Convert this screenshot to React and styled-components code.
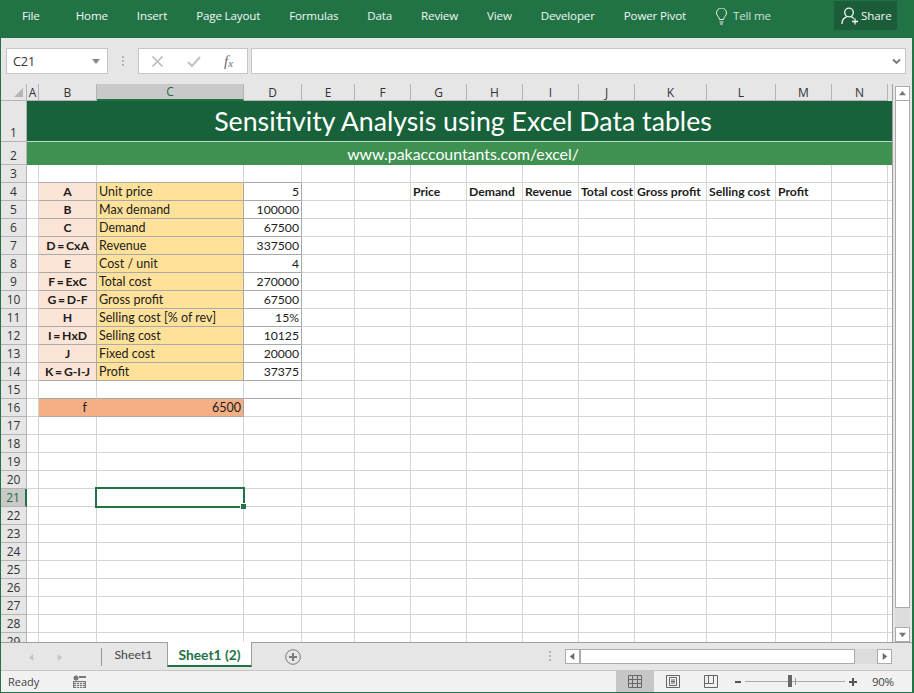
import React from 'react';
import styled, { createGlobalStyle } from 'styled-components';

const GlobalStyle = createGlobalStyle`
  html, body {
    margin: 0;
    padding: 0;
    overflow: hidden;
    background: #e6e6e6;
  }
`;

const UI_FONT = '"Open Sans", "Noto Sans", sans-serif';
const CELL_FONT = 'Lato, "Open Sans", sans-serif';

const Window = styled.div`
  box-sizing: border-box;
  width: 914px;
  height: 693px;
  display: flex;
  flex-direction: column;
  border-left: 1px solid #217346;
  border-right: 2px solid #217346;
  border-bottom: 1px solid #217346;
  background: #e6e6e6;
  font-family: ${UI_FONT};
  overflow: hidden;
`;

const Ribbon = styled.div`
  height: 38px;
  flex: none;
  display: flex;
  align-items: flex-start;
  gap: 29px;
  margin-left: -1px;
  margin-right: -2px;
  padding-left: 22px;
  background: #217346;
`;

const RibbonTab = styled.span`
  margin-top: 7px;
  line-height: 18px;
  font-size: 11.6px;
  letter-spacing: -0.16px;
  white-space: nowrap;
  color: #f2f7f4;
  margin-right: ${(p) => (p.$first ? '7px' : '0')};
`;

const TellMe = styled(RibbonTab)`
  display: flex;
  align-items: center;
  gap: 5px;
  color: #cfe0d6;
`;

const ShareButton = styled.div`
  margin: 1px 17px 0 auto;
  width: 63px;
  height: 29px;
  display: flex;
  align-items: center;
  gap: 1px;
  padding-left: 7px;
  box-sizing: border-box;
  background: #1b5c39;
  color: #f2f7f4;
  font-size: 11.6px;
  letter-spacing: -0.1px;
`;

const FormulaBar = styled.div`
  height: 46px;
  flex: none;
  box-sizing: border-box;
  display: flex;
  align-items: flex-start;
  padding: 10px 6px 0 5px;
  background: #e6e6e6;
`;

const FieldBox = styled.div`
  box-sizing: border-box;
  height: 26px;
  display: flex;
  align-items: center;
  background: #fff;
  border: 1px solid #c6c6c6;
`;

const NameBox = styled(FieldBox)`
  width: 102px;
  justify-content: space-between;
  padding: 0 7px 0 6px;
  font-size: 12.5px;
  color: #333;
`;

const Grip = styled.div`
  width: 2px;
  display: flex;
  flex-direction: column;
  gap: 2px;
  flex: none;
  i {
    width: 2px;
    height: 2px;
    background: #b5b5b5;
  }
`;

const BarGrip = styled(Grip)`
  margin: 8px 14px 0 14px;
`;

const FxBox = styled(FieldBox)`
  width: 110px;
  margin-right: 3px;
  padding-left: 12px;
  gap: 23px;
`;

const FxLabel = styled.span`
  font-family: "Liberation Serif", serif;
  font-style: italic;
  font-size: 15px;
  color: #6e6e6e;
  sub {
    font-size: 11px;
    vertical-align: -1px;
    line-height: 0;
  }
`;

const FormulaInput = styled(FieldBox)`
  flex: 1;
  justify-content: flex-end;
  padding-right: 4px;
`;

const Workspace = styled.div`
  height: 558px;
  flex: none;
  display: flex;
`;

const Sheet = styled.div`
  width: 892px;
  box-sizing: border-box;
  flex: none;
  display: grid;
  grid-template-columns: 26px 12px 58px 147px 58px 53px 56px 56px 56px 56px 56px 72px 69px 56px 56px 4px;
  grid-template-rows: 17px 41px 23px 18px repeat(26, 18px);
  overflow: hidden;
  background: #fff;
  border-right: 1px solid #9f9f9f;
  font-family: ${CELL_FONT};
`;

const Corner = styled.div`
  background: #e6e6e6;
  border-right: 1px solid #b4b4b4;
  border-bottom: 1px solid #b4b4b4;
  display: flex;
  align-items: flex-end;
  justify-content: flex-end;
  padding: 0 3px 3px 0;
`;

const ColHead = styled.div`
  box-sizing: border-box;
  display: flex;
  align-items: center;
  justify-content: center;
  font-family: ${UI_FONT};
  font-size: 12px;
  color: ${(p) => (p.$active ? '#1e6b40' : '#333')};
  background: ${(p) => (p.$active ? '#c9c9c9' : '#e6e6e6')};
  border-right: 1px solid ${(p) => (p.$blank ? 'transparent' : '#b4b4b4')};
  border-bottom: ${(p) => (p.$active ? '2px solid #217346' : p.$blank ? '0' : '1px solid #b4b4b4')};
`;

const RowHead = styled.div`
  box-sizing: border-box;
  display: flex;
  align-items: flex-end;
  justify-content: center;
  font-family: ${UI_FONT};
  font-size: 12px;
  line-height: 17px;
  color: ${(p) => (p.$active ? '#1e6b40' : '#333')};
  background: ${(p) => (p.$active ? '#c9c9c9' : '#e6e6e6')};
  border-bottom: 1px solid #b4b4b4;
  border-right: ${(p) => (p.$active ? '2px solid #217346' : '1px solid #b4b4b4')};
`;

const Banner = styled.div`
  grid-column: 2 / -1;
  display: flex;
  align-items: center;
  justify-content: center;
  padding-left: 7px;
  color: #fff;
  border-bottom: ${(p) => (p.$light ? '0' : '1px solid #c3d6c9')};
  background: ${(p) => (p.$light ? '#3f9152' : '#18623b')};
  font-size: ${(p) => (p.$light ? '15.85px' : '26.7px')};
`;

const Cell = styled.div`
  box-sizing: border-box;
  position: relative;
  min-width: 0;
  display: flex;
  align-items: center;
  padding: 0 2px;
  font-size: 12.2px;
  color: #1c1c1c;
  white-space: nowrap;
  background: ${(p) => p.$fill || '#fff'};
  font-weight: ${(p) => (p.$bold ? 700 : 400)};
  justify-content: ${(p) => (p.$align === 'right' ? 'flex-end' : 'flex-start')};
  border-right: ${(p) => (p.$noRight ? '0' : `1px solid ${p.$boxed ? '#a9a9a9' : '#d4d4d4'}`)};
  border-bottom: 1px solid ${(p) => (p.$boxed || p.$ledge ? '#a9a9a9' : '#d4d4d4')};
`;

const KeyCell = styled(Cell)`
  font-weight: 700;
  word-spacing: -1.2px;
  justify-content: center;
`;

const LabelCell = styled(Cell)`
  font-size: 12.5px;
`;

const FactorCell = styled(LabelCell)`
  padding-right: 10px;
`;

const SelectedCell = styled(Cell)`
  &::after {
    content: '';
    position: absolute;
    top: -2px;
    left: -2px;
    right: -2px;
    bottom: -2px;
    border: 2px solid #217346;
    z-index: 2;
  }
  &::before {
    content: '';
    position: absolute;
    right: -3px;
    bottom: -3px;
    width: 5px;
    height: 5px;
    background: #217346;
    box-shadow: -1px -1px 0 #fff;
    z-index: 3;
  }
`;

const VScroll = styled.div`
  flex: 1;
  display: flex;
  flex-direction: column;
  padding: 2px 3px 0 2px;
`;

const ScrollButton = styled.div`
  box-sizing: border-box;
  width: 15px;
  height: 15px;
  flex: none;
  display: flex;
  align-items: center;
  justify-content: center;
  background: #fff;
  border: 1px solid #ababab;
`;

const VThumb = styled.div`
  box-sizing: border-box;
  height: 507px;
  flex: none;
  background: #fff;
  border: 1px solid #ababab;
  border-top: 0;
`;

const VTrack = styled.div`
  flex: 1;
  background: #dcdcdc;
`;

const TabBar = styled.div`
  height: 28px;
  flex: none;
  box-sizing: border-box;
  display: flex;
  align-items: flex-start;
  border-top: 1px solid #9f9f9f;
  background: #e6e6e6;
`;

const TabNav = styled.div`
  width: 101px;
  height: 18px;
  flex: none;
  box-sizing: border-box;
  display: flex;
  align-items: center;
  gap: 21px;
  padding-left: 27px;
  margin-top: 5px;
  border-right: 1px solid #9a9a9a;
`;

const SheetTab = styled.div`
  box-sizing: border-box;
  width: 65px;
  height: 23px;
  padding-right: 2px;
  display: flex;
  align-items: center;
  justify-content: center;
  font-family: ${CELL_FONT};
  font-size: 12.3px;
  color: #444;
`;

const ActiveSheetTab = styled(SheetTab)`
  width: 85px;
  height: 25px;
  margin-top: -1px;
  padding: 2px 0 0;
  font-size: 13.8px;
  font-weight: 700;
  color: #217346;
  background: #fff;
  border-left: 1px solid #9f9f9f;
  border-right: 1px solid #9f9f9f;
  border-bottom: 2px solid #217346;
`;

const AddSheet = styled.div`
  margin: 5px 0 0 33px;
  width: 16px;
  height: 16px;
  flex: none;
`;

const TabGrip = styled(Grip)`
  margin: 8px 14px 0 auto;
`;

const HScroll = styled.div`
  width: 327px;
  height: 15px;
  margin: 6px 20px 0 0;
  flex: none;
  display: flex;
`;

const HThumb = styled.div`
  box-sizing: border-box;
  width: 275px;
  background: #fff;
  border: 1px solid #ababab;
`;

const HTrack = styled.div`
  flex: 1;
  background: #dcdcdc;
`;

const StatusBar = styled.div`
  flex: 1;
  box-sizing: border-box;
  display: flex;
  align-items: center;
  border-top: 1px solid #c6c6c6;
  background: #f1f1f1;
  color: #444;
  font-size: 11px;
  padding-left: 7px;
`;

const Ready = styled.span`
  width: 65px;
  flex: none;
`;

const ViewGroup = styled.div`
  margin-left: auto;
  height: 100%;
  display: flex;
`;

const ViewButton = styled.div`
  width: 38px;
  height: 100%;
  flex: none;
  display: flex;
  align-items: center;
  justify-content: center;
  background: ${(p) => (p.$active ? '#c6c6c6' : 'transparent')};
`;

const ZoomGroup = styled.div`
  display: flex;
  align-items: center;
  margin-left: 5px;
`;

const ZoomSign = styled.span`
  width: ${(p) => (p.$plus ? '8px' : '6px')};
  height: 2px;
  flex: none;
  position: relative;
  background: #555;
  &::after {
    content: '';
    display: ${(p) => (p.$plus ? 'block' : 'none')};
    position: absolute;
    left: 3px;
    top: -3px;
    width: 2px;
    height: 8px;
    background: #555;
  }
`;

const ZoomSlider = styled.div`
  width: 100px;
  height: 1px;
  flex: none;
  position: relative;
  margin: 0 4px;
  background: #aaa;
`;

const ZoomThumb = styled.div`
  position: absolute;
  left: 43px;
  top: -6px;
  width: 4px;
  height: 12px;
  background: #666;
`;

const ZoomTick = styled.div`
  position: absolute;
  left: 50px;
  top: -3px;
  width: 1px;
  height: 7px;
  background: #999;
`;

const ZoomValue = styled.span`
  width: 40px;
  flex: none;
  margin-left: 15px;
  font-size: 11.5px;
  letter-spacing: -0.3px;
`;

const COLUMNS = ['A', 'B', 'C', 'D', 'E', 'F', 'G', 'H', 'I', 'J', 'K', 'L', 'M', 'N', ''];

const TABS = ['Home', 'Insert', 'Page Layout', 'Formulas', 'Data', 'Review', 'View', 'Developer', 'Power Pivot'];

const TABLE = {
  4: ['A', 'Unit price', '5'],
  5: ['B', 'Max demand', '100000'],
  6: ['C', 'Demand', '67500'],
  7: ['D = CxA', 'Revenue', '337500'],
  8: ['E', 'Cost / unit', '4'],
  9: ['F = ExC', 'Total cost', '270000'],
  10: ['G = D-F', 'Gross profit', '67500'],
  11: ['H', 'Selling cost [% of rev]', '15%'],
  12: ['I = HxD', 'Selling cost', '10125'],
  13: ['J', 'Fixed cost', '20000'],
  14: ['K = G-I-J', 'Profit', '37375'],
};

const OUTPUTS = { G: 'Price', H: 'Demand', I: 'Revenue', J: 'Total cost', K: 'Gross profit', L: 'Selling cost', M: 'Profit' };

const Triangle = ({ dir, color = '#777', size = 7 }) => {
  const points = {
    up: '0,6 8,6 4,1',
    down: '0,2 8,2 4,7',
    left: '6,0 6,8 1,4',
    right: '2,0 2,8 7,4',
  };
  return (
    <svg width={size} height={size} viewBox="0 0 8 8">
      <polygon points={points[dir]} fill={color} />
    </svg>
  );
};

const Bulb = () => (
  <svg width="13" height="17" viewBox="0 0 13 17" fill="none" stroke="#e6f0ea" strokeWidth="1">
    <path d="M4.5 11.5C4.5 9 1.5 8 1.5 5a5 5 0 0 1 10 0c0 3-3 4-3 6.5z" />
    <path d="M4.5 14h4M5 16h3" />
  </svg>
);

const PersonPlus = () => (
  <svg width="19" height="18" viewBox="0 0 19 18" fill="none" stroke="#f2f7f4" strokeWidth="1.3">
    <circle cx="8" cy="5.5" r="4.3" />
    <path d="M1 17c0-4 2.500-6.500 5-7.300M10 9.700c1 .3 2 1 2.700 2" />
    <path d="M14 11.500v6M11 14.500h6" />
  </svg>
);

const CancelIcon = () => (
  <svg width="13" height="13" viewBox="0 0 13 13" stroke="#b9b9b9" strokeWidth="1.6">
    <path d="M1.500 1.500l10 10M11.500 1.500l-10 10" />
  </svg>
);

const CheckIcon = () => (
  <svg width="14" height="13" viewBox="0 0 14 13" fill="none" stroke="#c2c2c2" strokeWidth="2">
    <path d="M1 7l4 4 8-9" />
  </svg>
);

const Chevron = () => (
  <svg width="9" height="7" viewBox="0 0 9 7" fill="none" stroke="#777" strokeWidth="1.8">
    <path d="M1 1.500l3.500 3.500L8 1.500" />
  </svg>
);

const AddIcon = () => (
  <svg width="16" height="16" viewBox="0 0 16 16" fill="none" stroke="#7a7a7a">
    <circle cx="8" cy="8" r="7.300" />
    <path d="M8 4v8M4 8h8" strokeWidth="2" />
  </svg>
);

const MacroIcon = () => (
  <svg width="13" height="13" viewBox="0 0 13 13">
    <circle cx="3" cy="3" r="2.500" fill="#777" />
    <path d="M6 1h7v2H6zM0 6h13v7H0z" fill="#777" />
    <path d="M1 7.500h11M1 9.500h11M1 11.500h11M3.500 7v6M6.500 7v6M9.500 7v6" stroke="#f1f1f1" strokeWidth="0.8" />
  </svg>
);

const NormalViewIcon = () => (
  <svg width="14" height="13" viewBox="0 0 14 13" fill="none" stroke="#666">
    <path d="M.5.500h13v12H.5zM.5 4.500h13M.5 8.500h13M4.500.500v12M9.500.500v12" />
  </svg>
);

const PageViewIcon = () => (
  <svg width="14" height="13" viewBox="0 0 14 13" fill="none" stroke="#666">
    <path d="M.5.500h13v12H.5zM3.500 2.500h7v8h-7zM5 5h4M5 6.500h4M5 8h4" />
  </svg>
);

const BreakViewIcon = () => (
  <svg width="14" height="13" viewBox="0 0 14 13" fill="none" stroke="#666">
    <path d="M.5.500h13v12H.5zM.5 8.500h9v-8M4.500 .500v8" />
  </svg>
);

const renderTableCells = (row) => {
  const values = TABLE[row];
  return COLUMNS.map((col, i) => {
    const key = `${row}-${i}`;
    if (col === 'B') return <KeyCell key={key} $boxed $fill="#fce4d6">{values[0]}</KeyCell>;
    if (col === 'C') return <LabelCell key={key} $boxed $fill="#ffe199">{values[1]}</LabelCell>;
    if (col === 'D') return <Cell key={key} $boxed $align="right">{values[2]}</Cell>;
    if (row === 4 && OUTPUTS[col]) return <Cell key={key} $bold>{OUTPUTS[col]}</Cell>;
    return <Cell key={key} $noRight={col === ''} />;
  });
};

const renderRow = (row) => {
  if (TABLE[row]) return renderTableCells(row);
  return COLUMNS.map((col, i) => {
    const key = `${row}-${i}`;
    if (row === 16 && col === 'B') return <FactorCell key={key} $boxed $noRight $align="right" $fill="#f4b084">f</FactorCell>;
    if (row === 16 && col === 'C') return <LabelCell key={key} $boxed $align="right" $fill="#f4b084">6500</LabelCell>;
    if (row === 21 && col === 'C') return <SelectedCell key={key} />;
    return <Cell key={key} $noRight={col === ''} $ledge={(row === 3 || row === 15) && ['B', 'C', 'D'].includes(col)} />;
  });
};

const App = () => {
  const rows = Array.from({ length: 27 }, (_, i) => i + 3);
  return (
    <Window>
      <GlobalStyle />
      <Ribbon>
        <RibbonTab $first>File</RibbonTab>
        {TABS.map((tab) => (
          <RibbonTab key={tab}>{tab}</RibbonTab>
        ))}
        <TellMe>
          <Bulb />
          Tell me
        </TellMe>
        <ShareButton>
          <PersonPlus />
          Share
        </ShareButton>
      </Ribbon>

      <FormulaBar>
        <NameBox>
          C21
          <Triangle dir="down" size={8} color="#888" />
        </NameBox>
        <BarGrip>
          <i />
          <i />
          <i />
        </BarGrip>
        <FxBox>
          <CancelIcon />
          <CheckIcon />
          <FxLabel>
            f<sub>x</sub>
          </FxLabel>
        </FxBox>
        <FormulaInput>
          <Chevron />
        </FormulaInput>
      </FormulaBar>

      <Workspace>
        <Sheet>
          <Corner>
            <svg width="9" height="9" viewBox="0 0 9 9">
              <polygon points="9,0 9,9 0,9" fill="#b5b5b5" />
            </svg>
          </Corner>
          {COLUMNS.map((col) => (
            <ColHead key={col || 'blank'} $active={col === 'C'} $blank={col === ''}>
              {col}
            </ColHead>
          ))}

          <RowHead>1</RowHead>
          <Banner>Sensitivity Analysis using Excel Data tables</Banner>
          <RowHead>2</RowHead>
          <Banner $light>www.pakaccountants.com/excel/</Banner>

          {rows.map((row) => (
            <React.Fragment key={row}>
              <RowHead $active={row === 21}>{row}</RowHead>
              {renderRow(row)}
            </React.Fragment>
          ))}
        </Sheet>
        <VScroll>
          <ScrollButton>
            <Triangle dir="up" />
          </ScrollButton>
          <VThumb />
          <VTrack />
          <ScrollButton>
            <Triangle dir="down" />
          </ScrollButton>
        </VScroll>
      </Workspace>

      <TabBar>
        <TabNav>
          <Triangle dir="left" color="#c4c4c4" />
          <Triangle dir="right" color="#c4c4c4" />
        </TabNav>
        <SheetTab>Sheet1</SheetTab>
        <ActiveSheetTab>Sheet1 (2)</ActiveSheetTab>
        <AddSheet>
          <AddIcon />
        </AddSheet>
        <TabGrip>
          <i />
          <i />
          <i />
        </TabGrip>
        <HScroll>
          <ScrollButton>
            <Triangle dir="left" color="#666" />
          </ScrollButton>
          <HThumb />
          <HTrack />
          <ScrollButton>
            <Triangle dir="right" color="#666" />
          </ScrollButton>
        </HScroll>
      </TabBar>

      <StatusBar>
        <Ready>Ready</Ready>
        <MacroIcon />
        <ViewGroup>
          <ViewButton $active>
            <NormalViewIcon />
          </ViewButton>
          <ViewButton>
            <PageViewIcon />
          </ViewButton>
          <ViewButton>
            <BreakViewIcon />
          </ViewButton>
        </ViewGroup>
        <ZoomGroup>
          <ZoomSign />
          <ZoomSlider>
            <ZoomThumb />
            <ZoomTick />
          </ZoomSlider>
          <ZoomSign $plus />
        </ZoomGroup>
        <ZoomValue>90%</ZoomValue>
      </StatusBar>
    </Window>
  );
};

export default App;
